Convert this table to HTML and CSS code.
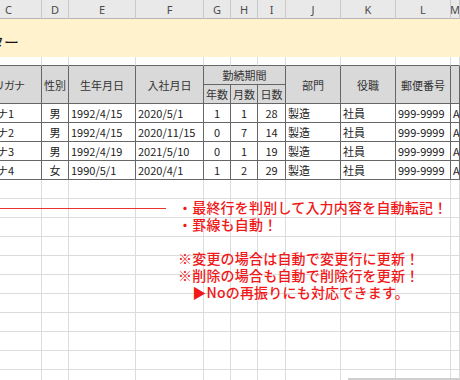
FILE: index.html
```html
<!DOCTYPE html>
<html lang="ja">
<head>
<meta charset="utf-8">
<link rel="stylesheet" href="styles.css">
</head>
<body>
<div class="sheet">
  <div class="grid">
    <div class="colh clip"><span class="cl">C</span></div>
    <div class="colh">D</div>
    <div class="colh">E</div>
    <div class="colh">F</div>
    <div class="colh">G</div>
    <div class="colh">H</div>
    <div class="colh">I</div>
    <div class="colh">J</div>
    <div class="colh">K</div>
    <div class="colh">L</div>
    <div class="colh">M</div>

    <div class="band"><span class="title">社員マスター</span></div>

    <div class="gap t"></div><div class="gap t"></div><div class="gap t"></div><div class="gap t"></div><div class="gap t"></div><div class="gap t"></div><div class="gap t"></div><div class="gap t"></div><div class="gap t"></div><div class="gap t"></div><div class="gap t"></div>

    <div class="th r2 clip"><span class="furi-h">フリガナ</span></div>
    <div class="th r2">性別</div>
    <div class="th r2">生年月日</div>
    <div class="th r2">入社月日</div>
    <div class="th c3">勤続期間</div>
    <div class="th r2">部門</div>
    <div class="th r2">役職</div>
    <div class="th r2">郵便番号</div>
    <div class="th r2"></div>
    <div class="th">年数</div>
    <div class="th">月数</div>
    <div class="th">日数</div>

    <div class="td clip"><span class="furi">フリガナ1</span></div><div class="td c">男</div><div class="td">1992/4/15</div><div class="td">2020/5/1</div><div class="td c">1</div><div class="td c">1</div><div class="td c">28</div><div class="td">製造</div><div class="td">社員</div><div class="td">999-9999</div><div class="td">A</div>
    <div class="td clip"><span class="furi">フリガナ2</span></div><div class="td c">男</div><div class="td">1992/4/15</div><div class="td">2020/11/15</div><div class="td c">0</div><div class="td c">7</div><div class="td c">14</div><div class="td">製造</div><div class="td">社員</div><div class="td">999-9999</div><div class="td">A</div>
    <div class="td clip"><span class="furi">フリガナ3</span></div><div class="td c">男</div><div class="td">1992/4/19</div><div class="td">2021/5/10</div><div class="td c">0</div><div class="td c">1</div><div class="td c">19</div><div class="td">製造</div><div class="td">社員</div><div class="td">999-9999</div><div class="td">A</div>
    <div class="td clip"><span class="furi">フリガナ4</span></div><div class="td c">女</div><div class="td">1990/5/1</div><div class="td">2020/4/1</div><div class="td c">1</div><div class="td c">2</div><div class="td c">29</div><div class="td">製造</div><div class="td">社員</div><div class="td">999-9999</div><div class="td">A</div>
  </div>
  <div class="grid empty">
    <div></div><div></div><div></div><div></div><div></div><div></div><div></div><div></div><div></div><div></div><div></div>
    <div></div><div></div><div></div><div></div><div></div><div></div><div></div><div></div><div></div><div></div><div></div>
    <div></div><div></div><div></div><div></div><div></div><div></div><div></div><div></div><div></div><div></div><div></div>
    <div></div><div></div><div></div><div></div><div></div><div></div><div></div><div></div><div></div><div></div><div></div>
    <div></div><div></div><div></div><div></div><div></div><div></div><div></div><div></div><div></div><div></div><div></div>
    <div></div><div></div><div></div><div></div><div></div><div></div><div></div><div></div><div></div><div></div><div></div>
    <div></div><div></div><div></div><div></div><div></div><div></div><div></div><div></div><div></div><div></div><div></div>
    <div></div><div></div><div></div><div></div><div></div><div></div><div></div><div></div><div></div><div></div><div></div>
    <div></div><div></div><div></div><div></div><div></div><div></div><div></div><div></div><div></div><div></div><div></div>
    <div></div><div></div><div></div><div></div><div></div><div></div><div></div><div></div><div></div><div></div><div></div>
    <div></div><div></div><div></div><div></div><div></div><div></div><div></div><div></div><div></div><div></div><div></div>
  </div>

  <div class="redline"></div>
  <div class="note">
    <p>・最終行を判別して入力内容を自動転記！</p>
    <p>・罫線も自動！</p>
    <p>&nbsp;</p>
    <p>※変更の場合は自動で変更行に更新！</p>
    <p>※削除の場合も自動で削除行を更新！</p>
    <p>　▶Noの再振りにも対応できます。</p>
  </div>
  <div class="edge"></div>
</div>
</body>
</html>
```

FILE: styles.css
```css
html, body {
  margin: 0;
  padding: 0;
  background: #fff;
}
body {
  width: 460px;
  height: 380px;
  overflow: hidden;
  font-family: "Noto Sans CJK JP", "Noto Sans", sans-serif;
  font-size: 11px;
  color: #222;
}
.sheet {
  position: relative;
  width: 460px;
  height: 380px;
  overflow: hidden;
}
.grid {
  display: grid;
  grid-template-columns: 42px 27px 67px 68px 27px 27px 28px 55px 55px 55px 1fr;
  grid-template-rows: 19px 38px 9px 19px 19px 19px 19px 19px 19px;
}
.grid > div {
  box-sizing: border-box;
  display: flex;
  align-items: center;
  white-space: nowrap;
  overflow: hidden;
}
.colh {
  background: #e9e9e9;
  border-right: 1px solid #c9c9c9;
  border-bottom: 1px solid #b5b5b5;
  justify-content: center;
  font-family: "Noto Sans", sans-serif;
  color: #4a4a4a;
  font-size: 11px;
}
.colh.clip {
  justify-content: flex-start;
}
.cl {
  margin-left: 5px;
}
.band {
  grid-column: 1 / -1;
  background: #fff2cc;
  justify-content: flex-end;
}
.band .title {
  font-size: 15px;
  color: #111;
  margin-right: 441px;
  padding-top: 6px;
}
.gap {
  border-right: 1px solid #dcdcdc;
}
.gap.t {
  border-bottom: 1px solid #666;
}
.th {
  background: #d9d9d9;
  border-right: 1px solid #666;
  border-bottom: 1px solid #666;
  justify-content: center;
  color: #333;
}
.th.r2 {
  grid-row: span 2;
}
.th.c3 {
  grid-column: span 3;
}
.clip {
  justify-content: flex-end;
}
.th.clip {
  justify-content: flex-end;
}
.furi-h {
  margin-right: 17px;
  letter-spacing: -1px;
}
.furi {
  margin-right: 27px;
}
.td {
  border-right: 1px solid #666;
  border-bottom: 1px solid #666;
  padding-left: 2px;
  color: #222;
}
.td.clip {
  padding-left: 0;
}
.td.c {
  justify-content: center;
  padding-left: 0;
}
.grid.empty {
  grid-template-rows: repeat(11, 19px);
}
.grid.empty > div {
  border-right: 1px solid #dcdcdc;
  border-bottom: 1px solid #dcdcdc;
}
.redline {
  position: absolute;
  left: 0;
  top: 208px;
  width: 166px;
  height: 1px;
  background: #e8342e;
}
.note {
  position: absolute;
  left: 178px;
  top: 199px;
  color: #f01818;
  font-size: 14px;
  line-height: 17px;
  font-weight: 500;
  letter-spacing: 0.2px;
}
.note p {
  margin: 0;
  white-space: nowrap;
}
.edge {
  position: absolute;
  left: 348px;
  top: 378px;
  width: 112px;
  height: 2px;
  background: #cfcfcf;
}
```
